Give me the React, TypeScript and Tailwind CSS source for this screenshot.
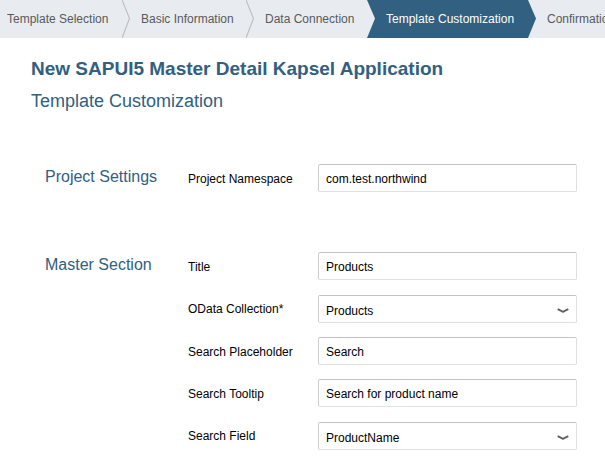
import type { ReactNode } from 'react';

const steps = [
  { label: 'Template Selection', width: 'w-[130px]' },
  { label: 'Basic Information', width: 'w-[124px]' },
  { label: 'Data Connection', width: 'w-[121px]' },
  { label: 'Template Customization', width: 'w-[161px]' },
  { label: 'Confirmation', width: 'w-[110px]' },
];
const current = 3;

function StepArrow({ index }: { index: number }) {
  const active = index === current;
  const beforeActive = index === current - 1;
  return (
    <svg className="h-[38px] w-2 shrink-0" viewBox="0 0 8 38" aria-hidden="true">
      {beforeActive && <rect width="8" height="38" fill="#316080" />}
      <path d="M0 0L8 18.5L0 38Z" fill={active ? '#316080' : '#e8ecf0'} />
      {!active && !beforeActive && (
        <path d="M0 0L7.5 18.5L0 38" fill="none" stroke="#bcc0c4" strokeWidth="1.2" />
      )}
    </svg>
  );
}

function Section({ title, children }: { title: string; children: ReactNode }) {
  return (
    <section className="flex items-start">
      <h3 className="w-[143px] shrink-0 text-base leading-[26px] text-[#316080]">{title}</h3>
      <div className="flex min-w-0 flex-1 flex-col gap-[14px]">{children}</div>
    </section>
  );
}

const control =
  'block h-7 w-full rounded-xs border border-[#e0e0e0] border-t-[#c3c3c3] border-l-[#cccccc] bg-white pl-[7px] text-[12px] text-black outline-none';

function TextField({ id, label, value }: { id: string; label: string; value: string }) {
  return (
    <div className="flex items-center">
      <label htmlFor={id} className="w-[130px] shrink-0 pt-0.5 text-[12px] leading-4 text-black">
        {label}
      </label>
      <div className="min-w-0 flex-1">
        <input id={id} type="text" defaultValue={value} className={`pt-0.5 ${control}`} />
      </div>
    </div>
  );
}

function SelectField({ id, label, value }: { id: string; label: string; value: string }) {
  return (
    <div className="flex items-center pt-px">
      <label htmlFor={id} className="w-[130px] shrink-0 text-[12px] leading-4 text-black">
        {label}
      </label>
      <div className="relative min-w-0 flex-1">
        <select id={id} defaultValue={value} className={`appearance-none pt-1 ${control}`}>
          <option value={value}>{value}</option>
        </select>
        <svg
          className="pointer-events-none absolute top-[13px] right-2 h-[6px] w-3"
          viewBox="0 0 12 6"
          aria-hidden="true"
        >
          <path
            d="M0.7 1.2Q3.2 2.6 6 3.8Q8.8 2.6 11.3 1.2"
            fill="none"
            stroke="#5f6368"
            strokeWidth="1.9"
          />
        </svg>
      </div>
    </div>
  );
}

export default function App() {
  return (
    <div className="min-h-screen overflow-hidden bg-white font-['Liberation_Sans',Arial,sans-serif]">
      <nav aria-label="Wizard steps" className="overflow-hidden bg-[#e8ecf0]">
        <ol className="flex">
          {steps.map((step, i) => (
            <li
              key={step.label}
              aria-current={i === current ? 'step' : undefined}
              className={`flex h-[38px] shrink-0 items-center whitespace-nowrap text-[12px] leading-4 ${step.width} ${
                i === current ? 'text-white' : 'text-[#58595b]'
              }`}
            >
              <span
                className={`flex h-full flex-1 items-center ${i === 0 ? 'pl-[7px]' : 'pl-[11px]'} ${
                  i === current ? 'bg-[#316080]' : ''
                }`}
              >
                {step.label}
              </span>
              {i < steps.length - 1 && <StepArrow index={i} />}
            </li>
          ))}
        </ol>
      </nav>

      <header className="px-[31px] pt-[19px]">
        <h1 className="text-[19px] leading-6 font-bold text-[#316080]">
          New SAPUI5 Master Detail Kapsel Application
        </h1>
        <h2 className="mt-2 text-[18px] leading-6 text-[#316080]">Template Customization</h2>
      </header>

      <form className="flex flex-col gap-[60px] pt-[51px] pr-7 pb-3 pl-[45px]">
        <Section title="Project Settings">
          <TextField id="namespace" label="Project Namespace" value="com.test.northwind" />
        </Section>
        <Section title="Master Section">
          <TextField id="title" label="Title" value="Products" />
          <SelectField id="collection" label="OData Collection*" value="Products" />
          <TextField id="placeholder" label="Search Placeholder" value="Search" />
          <TextField id="tooltip" label="Search Tooltip" value="Search for product name" />
          <SelectField id="field" label="Search Field" value="ProductName" />
        </Section>
      </form>
    </div>
  );
}
